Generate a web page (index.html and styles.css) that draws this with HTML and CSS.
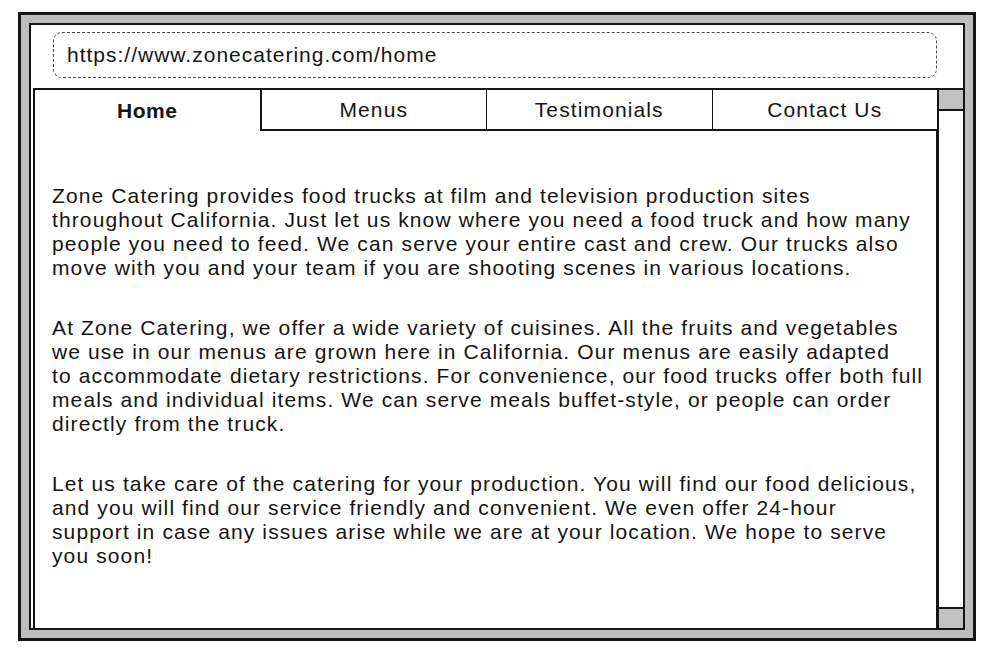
FILE: index.html
```html
<!DOCTYPE html>
<html lang="en">
<head>
<meta charset="utf-8">
<title>Zone Catering</title>
<link rel="stylesheet" href="styles.css">
</head>
<body>
<div class="window">
  <div class="screen">
    <div class="urlbar">https://www.zonecatering.com/home</div>
    <div class="main">
      <div class="page">
        <nav class="tabs">
          <div class="tab active">Home</div>
          <div class="tab">Menus</div>
          <div class="tab">Testimonials</div>
          <div class="tab last">Contact Us</div>
        </nav>
        <div class="content">
          <p>Zone Catering provides food trucks at film and television production sites<br>throughout California. Just let us know where you need a food truck and how many<br>people you need to feed. We can serve your entire cast and crew. Our trucks also<br>move with you and your team if you are shooting scenes in various locations.</p>
          <p>At Zone Catering, we offer a wide variety of cuisines. All the fruits and vegetables<br>we use in our menus are grown here in California. Our menus are easily adapted<br>to accommodate dietary restrictions. For convenience, our food trucks offer both full<br>meals and individual items. We can serve meals buffet-style, or people can order<br>directly from the truck.</p>
          <p>Let us take care of the catering for your production. You will find our food delicious,<br>and you will find our service friendly and convenient. We even offer 24-hour<br>support in case any issues arise while we are at your location. We hope to serve<br>you soon!</p>
        </div>
      </div>
      <div class="scrollbar">
        <div class="thumb top"></div>
        <div class="thumb bottom"></div>
      </div>
    </div>
  </div>
</div>
</body>
</html>
```

FILE: styles.css
```css
html, body {
  margin: 0;
  padding: 0;
  background: #ffffff;
}

body {
  font-family: "Liberation Sans", Arial, Helvetica, sans-serif;
  color: #141414;
  font-size: 21px;
  letter-spacing: 1.12px;
}

.window {
  box-sizing: border-box;
  margin: 12px 0 0 18px;
  width: 958px;
  height: 629px;
  border: 3px solid #151515;
  background: #bdbdbd;
  padding: 8px;
}

.screen {
  box-sizing: border-box;
  height: 100%;
  border: 2px solid #151515;
  background: #ffffff;
  display: flex;
  flex-direction: column;
}

.urlbar {
  box-sizing: border-box;
  margin: 7px 26px 0 22px;
  height: 46px;
  border: 1px dashed #4a4a4a;
  border-radius: 9px;
  padding-left: 13px;
  display: flex;
  align-items: center;
  white-space: nowrap;
  letter-spacing: 1px;
}

.main {
  flex: 1;
  margin-top: 10px;
  padding-left: 2px;
  display: flex;
  min-height: 0;
}

.page {
  flex: 1;
  display: flex;
  flex-direction: column;
  min-width: 0;
}

.tabs {
  display: flex;
  height: 43px;
}

.tab {
  box-sizing: border-box;
  flex: 1;
  display: flex;
  align-items: center;
  justify-content: center;
  border-top: 2px solid #151515;
  border-bottom: 2px solid #151515;
  border-right: 1px solid #151515;
  white-space: nowrap;
}

.tab.active {
  font-weight: bold;
  letter-spacing: 0.6px;
  border-left: 2px solid #151515;
  border-right: 2px solid #151515;
  border-bottom: none;
}

.tab.last {
  border-right: none;
}

.content {
  flex: 1;
  border-left: 2px solid #151515;
  border-right: 1px solid #151515;
  padding: 53px 0 0 17px;
  white-space: nowrap;
}

.content p {
  margin: 0 0 36px 0;
  line-height: 24px;
}

.scrollbar {
  box-sizing: border-box;
  width: 26px;
  border-top: 2px solid #151515;
  border-left: 2px solid #151515;
  display: flex;
  flex-direction: column;
  justify-content: space-between;
}

.thumb {
  height: 19px;
  background: #c2c2c2;
}

.thumb.top {
  border-bottom: 2px solid #151515;
}

.thumb.bottom {
  border-top: 2px solid #151515;
}
```
